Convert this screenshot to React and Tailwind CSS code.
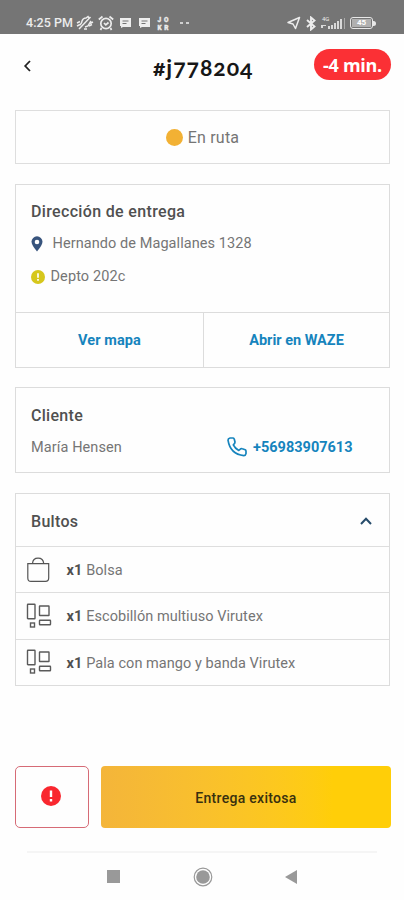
import { useState } from "react";

const StatusBar = () => {
  return (
    <header className="h-[34px] bg-[#757575] flex items-end justify-between pl-[26px] pr-[28px] pb-px text-[#ececec]">
      <div className="flex items-center h-5">
        <span className="w-[47px] text-[12.5px] font-medium tracking-[0.05px] whitespace-nowrap">4:25 PM</span>
        <svg className="ml-[3px]" width="18" height="16" viewBox="0 0 18 16" fill="none" stroke="currentColor" strokeWidth="1.5">
          <path d="M4 10Q6 8 6 6Q7 3 10 3L12 1.5L13 3M15 6L12 11L9 12M8 14H11" />
          <path d="M3 14L14.5 2M1 8L4 6.5M1 11L4 9.5M14 8.5L17 7M13 11L16 9.5" />
        </svg>
        <svg className="ml-[4px]" width="16" height="16" viewBox="0 0 16 16" fill="none" stroke="currentColor" strokeWidth="1.7">
          <circle cx="8" cy="8.5" r="5.2" />
          <path d="M0.8 4.5L4.5 1.5M15.2 4.5L11.5 1.5M3.5 13L2.5 15M12.5 13L13.5 15M6 8L7.8 9.8L10.5 7.5" />
        </svg>
        <span className="ml-[6px] flex gap-[8px]">
          <ChatIcon />
          <ChatIcon />
        </span>
        <svg className="ml-[6px]" width="14" height="18" viewBox="0 0 14 18" fill="currentColor" stroke="currentColor" strokeWidth=".3">
          <text x="1.5" y="8" fontSize="6.5" fontWeight="900" textLength="11">JO</text>
          <text x="1.5" y="16" fontSize="6.5" fontWeight="900" textLength="11">KR</text>
        </svg>
        <span className="ml-[10px] flex gap-[3px]">
          <i className="w-[3px] h-[2px] bg-[#d0d0d0]" />
          <i className="w-[3px] h-[2px] bg-[#d0d0d0]" />
        </span>
      </div>

      <div className="flex items-center h-5">
        <svg width="14" height="14" viewBox="0 0 14 14" fill="none" stroke="currentColor" strokeWidth="1.5" strokeLinejoin="round">
          <path d="M12.5 1.5L1 6.5L6 8L8.5 12.5Z" />
        </svg>
        <svg className="ml-[5px]" width="10" height="15" viewBox="0 0 10 15" fill="none" stroke="currentColor" strokeWidth="1.9">
          <path d="M1 4L8.5 10.5L5 13.5V1.5L8.5 4.5L1 11" />
        </svg>
        <svg className="ml-[5px]" width="24" height="14" viewBox="0 0 24 14" fill="currentColor">
          <text x="1" y="5" fontSize="6">4G</text>
          <path d="M0 9h5v1H2v2H0zM7 10h2v3H7zM10 9h2v4h-2zM13 7h2v6h-2zM16 5h2v8h-2zM19 3h2v10h-2z" opacity=".85" />
          <path d="M23 2h1v11h-1z" opacity=".45" />
        </svg>
        <div className="ml-[5px] w-[23px] h-[12px] border-[1.5px] border-[#e8e8e8] rounded-[3px] flex items-center p-px">
          <span className="w-full h-[8px] bg-[#b0b0b0] text-[8px] leading-[8px] font-bold text-center text-white">45</span>
        </div>
        <i className="w-[3px] h-[5px] bg-[#e8e8e8] rounded-r-sm" />
      </div>
    </header>
  );
};

const ChatIcon = () => (
  <svg width="11" height="10" viewBox="0 0 11 10">
    <path d="M0 0H11V9H3L1 10V8H0Z" fill="#eee" />
    <path d="M2.5 3H8.5M2.5 5.5H6.5" stroke="#757575" strokeWidth="1" />
  </svg>
);

const BagIcon = () => (
  <svg width="26" height="28" viewBox="0 0 26 28" fill="none" stroke="#555" strokeWidth="1.2">
    <path d="M1.8 7.6H22.7V22Q22.7 25.4 19.5 25.4H5Q1.8 25.4 1.8 22Z" />
    <path d="M6.5 7.5C7 0.3 17.1 0.3 17.7 7.5" />
  </svg>
);

const PackageIcon = () => (
  <svg width="26" height="28" viewBox="0 0 26 28" fill="none" stroke="#5a5a5a" strokeWidth="1.4">
    <rect x="1.5" y="2.2" width="7.5" height="14.5" rx=".5" />
    <rect x="13.5" y="4" width="9.5" height="9.5" rx=".3" />
    <rect x="4.5" y="21" width="4" height="4" />
    <rect x="13.5" y="18.3" width="11" height="4.4" rx=".5" />
  </svg>
);

const AlertIcon = ({ size, color }) => (
  <svg width={size} height={size} viewBox="0 0 20 20">
    <circle cx="10" cy="10" r="10" fill={color} />
    <path d="M10 4.5V11M10 13V15.5" stroke="#fff" strokeWidth="2.4" />
  </svg>
);

const packages = [
  { id: 1, name: "Bolsa", icon: BagIcon },
  { id: 2, name: "Escobillón multiuso Virutex", icon: PackageIcon },
  { id: 3, name: "Pala con mango y banda Virutex", icon: PackageIcon },
];

const App = () => {
  const [open, setOpen] = useState(true);

  return (
    <div className="w-[404px] h-[900px] bg-[#fefefe] flex flex-col overflow-hidden font-['Roboto',sans-serif] text-[#757575]">
      <StatusBar />

      <div className="h-[76px] pt-[15px] pl-[22px] pr-[13px] flex items-start">
        <button className="mt-[9px] w-[40px]">
          <svg width="12" height="16" viewBox="0 0 12 16" fill="none" stroke="#222" strokeWidth="1.8">
            <path d="M8 3L3.2 8L8 13" />
          </svg>
        </button>
        <h1 className="ml-[91px] mt-[3px] text-[23px] leading-[30px] font-bold text-[#171717] font-['Lato',sans-serif] oldstyle-nums tracking-[0.95px] whitespace-nowrap">
          #j778204
        </h1>
        <span className="ml-auto w-[77px] h-[31px] pt-px rounded-full bg-[#fb3035] text-white text-[18px] font-bold font-['Open_Sans',sans-serif] flex items-center justify-center tracking-[-0.3px]">
          -4 min.
        </span>
      </div>

      <main className="pl-[15px] pr-[14px] flex flex-col">
        <section className="h-[54px] border border-[#dedede] flex items-center justify-center gap-[5px]">
          <i className="w-[17px] h-[17px] rounded-full bg-[#f2b134]" />
          <span className="pt-[2px] text-base tracking-[0.2px]">En ruta</span>
        </section>

        <section className="mt-5 h-[184px] border border-[#dcdcdc] flex flex-col">
          <div className="h-[127px] px-[15px] pt-[15px]">
            <h2 className="text-base leading-6 font-medium text-[#505050] tracking-[0.34px]">Dirección de entrega</h2>
            <p className="mt-[8px] h-6 flex items-center text-[14.5px] tracking-[0.07px]">
              <svg width="12" height="16" viewBox="0 0 12 16">
                <path d="M6 15.5Q0.5 9 0.5 5.8A5.5 5.5 0 0 1 11.5 5.8Q11.5 9 6 15.5Z" fill="#38547d" />
                <circle cx="6" cy="6" r="2.3" fill="#fff" />
              </svg>
              <span className="ml-[9.5px]">Hernando de Magallanes 1328</span>
            </p>
            <p className="mt-[9px] h-6 flex items-center text-[14.5px] tracking-[0.1px]">
              <AlertIcon size={14} color="#d6c71c" />
              <span className="ml-[5.5px]">Depto 202c</span>
            </p>
          </div>
          <div className="flex-1 border-t border-[#dcdcdc] flex text-[14.5px] font-bold text-[#1684bd]">
            <button className="w-[188px] pt-[2px] border-r border-[#dcdcdc] tracking-[0.1px]">Ver mapa</button>
            <button className="flex-1 pt-[2px]">Abrir en WAZE</button>
          </div>
        </section>

        <section className="mt-[19px] h-[86px] border border-[#dcdcdc] px-[15px] pt-[16px]">
          <h2 className="text-base leading-6 font-medium text-[#505050] tracking-[0.3px]">Cliente</h2>
          <div className="mt-[6px] h-7 flex items-center justify-between pr-[21.5px]">
            <span className="text-[14.5px] tracking-[0.1px]">María Hensen</span>
            <a className="flex items-center gap-[6px] text-[14.5px] font-bold text-[#1684bd]">
              <svg className="relative -top-px" width="20" height="20" viewBox="0 0 20 20" fill="none" stroke="currentColor" strokeWidth="1.7" strokeLinejoin="round">
                <path d="M3.1 1L6 1Q7 1.2 7.3 2.2L8 5Q8.1 6.2 6.3 7.8Q8 11.3 11.8 13.4L13.7 11.8Q14.5 11.5 15.3 11.8L18.2 12.8Q19 13.2 19 14.2V16.6Q18.6 18.6 16.8 18.6Q3.3 17.4 1 3.2Q1 1.5 3.1 1Z" />
              </svg>
              +56983907613
            </a>
          </div>
        </section>

        <section className="mt-5 border border-[#dcdcdc]">
          <button onClick={() => setOpen(!open)} className="w-full h-[52px] px-[15px] pt-[3px] flex items-center justify-between">
            <h2 className="text-base font-medium text-[#505050] tracking-[0.3px]">Bultos</h2>
            <svg className="mr-px mb-px" width="14" height="12" viewBox="0 0 14 12" fill="none" stroke="#274c6b" strokeWidth="2">
              <path d="M2 9L7 3.8L12 9" />
            </svg>
          </button>
          {open &&
            packages.map(({ id, name, icon: Icon }) => (
              <div key={id} className="h-[46.4px] border-t border-[#dedede] pl-[10px] flex items-center text-[14.5px]">
                <Icon />
                <b className="ml-[14.5px] pt-[2px] text-[#505050]">x1</b>
                <span className="ml-[4px] pt-[2px] tracking-[0.05px]">{name}</span>
              </div>
            ))}
        </section>
      </main>

      <div className="mt-auto pl-[15px] pr-[13px] flex gap-[12px]">
        <button className="w-[74px] h-[62px] border border-[#d66b76] rounded-[5px] flex items-center justify-center pr-[2px] pb-[2px]">
          <AlertIcon size={20} color="#f9272f" />
        </button>
        <button className="flex-1 h-[62px] rounded-[4px] bg-linear-to-r from-[#f4b53a] to-[#ffce08] to-80% pt-[2px] text-[14px] font-medium text-[#38300f] tracking-[0.3px]">
          Entrega exitosa
        </button>
      </div>

      <nav className="mt-[23px] h-[49px] mx-[27px] border-t-2 border-[#f5f5f5] flex items-center justify-between px-[80px] text-[#999]">
        <i className="w-[13px] h-[13px] bg-current" />
        <svg width="20" height="20" viewBox="0 0 20 20">
          <circle cx="10" cy="10" r="8.8" fill="none" stroke="currentColor" strokeWidth="1.2" />
          <circle cx="10" cy="10" r="6.8" fill="currentColor" />
        </svg>
        <svg width="12" height="14" viewBox="0 0 12 14">
          <path d="M0 7L12 0V14Z" fill="currentColor" />
        </svg>
      </nav>
    </div>
  );
};

export default App;
